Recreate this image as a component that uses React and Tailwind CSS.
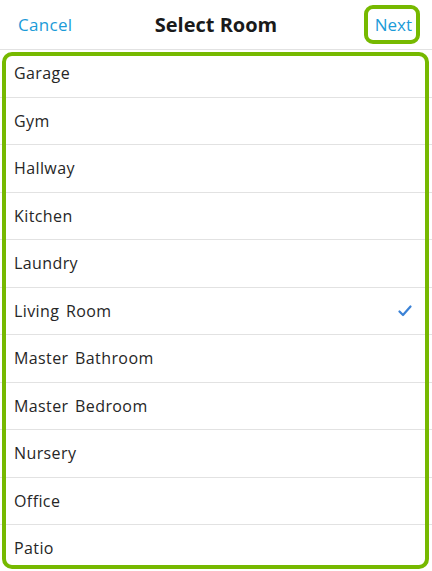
const rooms = [
  "Garage",
  "Gym",
  "Hallway",
  "Kitchen",
  "Laundry",
  "Living Room",
  "Master Bathroom",
  "Master Bedroom",
  "Nursery",
  "Office",
  "Patio",
];

const selected = "Living Room";

const Check = () => (
  <svg width="14" height="12" viewBox="0 0 14 12" fill="none">
    <path d="M1.5 6.5 L5 10 L12.5 1.5" stroke="#3b82d6" strokeWidth="2.2" strokeLinecap="round" strokeLinejoin="round" />
  </svg>
);

const App = () => {
  return (
    <div className="relative w-[432px] h-[571px] overflow-hidden bg-white font-['Open_Sans','Liberation_Sans',sans-serif]">
      {/* header */}
      <div className="relative flex items-center justify-between h-[50px] px-[18px] border-b border-[#e2e2e2]">
        <button className="text-[17px] text-[#1b9bd8] tracking-[0.3px]">Cancel</button>
        <h1 className="absolute left-0 right-0 text-center text-[20px] font-bold text-[#1a1a1a] pointer-events-none">
          Select Room
        </h1>
        <button className="relative text-[17px] text-[#1b9bd8] mr-[2px]">
          Next
          <span className="absolute -left-[11px] -right-[8px] -top-[7px] -bottom-[7px] border-[4px] border-[#76b900] rounded-[9px]" />
        </button>
      </div>

      {/* list */}
      <div className="flex flex-col">
        {rooms.map((room) => (
          <div
            key={room}
            className="flex items-center justify-between h-[47.5px] pl-[14px] pr-[20px] border-b border-[#e2e2e2] text-[16px] text-[#262626] tracking-[0.4px] [word-spacing:2px]"
          >
            <span>{room}</span>
            {room === selected && <Check />}
          </div>
        ))}
      </div>

      {/* highlight overlay */}
      <div className="absolute left-[2px] right-[3px] top-[52px] bottom-[2px] border-[4px] border-[#76b900] rounded-[10px] pointer-events-none" />
    </div>
  );
};

export default App;
